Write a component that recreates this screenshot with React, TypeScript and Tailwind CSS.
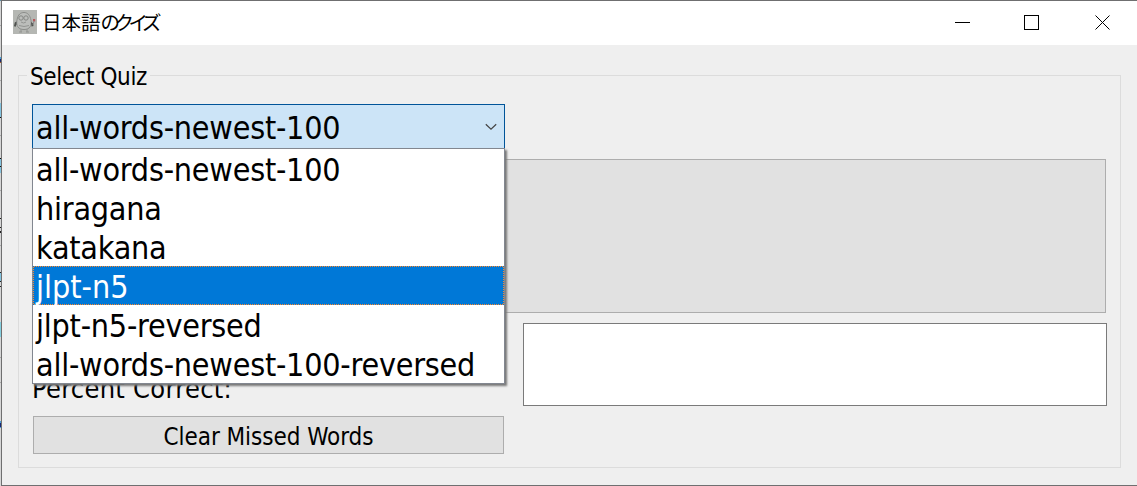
import React from "react";

const options = [
  { label: "all-words-newest-100" },
  { label: "hiragana" },
  { label: "katakana" },
  { label: "jlpt-n5", selected: true },
  { label: "jlpt-n5-reversed" },
  { label: "all-words-newest-100-reversed" },
];

// Slivers of the window behind, as [height, colour] from top to bottom.
const backdrop: [number, string][] = [
  [1, "#5c8fa8"], [24, "#d6d6d6"], [1, "#aaa"], [31, "#d6d6d6"], [2, "#4aa0d8"], [3, "#1a2a70"], [1, "#a05a28"],
  [17, "#d6d6d6"], [1, "#aaa"], [22, "#d6d6d6"], [14, "#84c4e0"], [1, "#111"], [17, "#d6d6d6"], [1, "#aaa"],
  [22, "#d6d6d6"], [1, "#111"], [7, "#84c4e0"], [1, "#111"], [6, "#84c4e0"], [17, "#d6d6d6"], [1, "#aaa"],
  [27, "#d6d6d6"], [1, "#222"], [8, "#d6d6d6"], [1, "#222"], [3, "#d6d6d6"], [2, "#222"], [12, "#d6d6d6"],
  [1, "#aaa"], [26, "#d6d6d6"], [1, "#222"], [8, "#84c4e0"], [1, "#222"], [4, "#d6d6d6"], [1, "#222"],
  [35, "#d6d6d6"], [15, "#84d0e0"], [20, "#d6d6d6"], [1, "#aaa"], [24, "#d6d6d6"], [1, "#aaa"],
  [38, "#d6d6d6"], [2, "#4aa0d8"], [4, "#182878"], [1, "#4aa0d8"], [57, "#d6d6d6"],
];

function AppIcon() {
  return (
    <svg width="24" height="24" viewBox="0 0 24 24" fill="none">
      <rect width="24" height="24" fill="#b5b7b3" />
      <path d="M4 10C5 4 8 2.500 11 2.500s6 2 7 8c.7 5-1 9-7 9s-8-4-7-9.500Z" fill="#bcbebb" stroke="#8c8e8b" />
      <circle cx="8" cy="8" r="2.200" stroke="#858784" />
      <circle cx="13" cy="8" r="2.200" stroke="#858784" />
      <path d="M8 12q2.500 2 5 0M6 15.500q5 2 10 0M8 19v3M14 19v3M6 22h3M13 22h3" stroke="#929491" />
      <path d="M3.500 11.500v3l-1.200 2.500-1.300-1 .8-3.500zM18 12l2 1.500.5 2.500-2 .5z" fill="#4e514e" />
      <path d="M20 9h2.200v2.500h-2.200z" fill="#b8595d" />
      <path d="M21 11l-1 4" stroke="#888" />
    </svg>
  );
}

export default function App() {
  return (
    <div className="flex h-[486px] w-[1137px] overflow-hidden font-['DejaVu_Sans_Condensed','DejaVu_Sans',sans-serif] text-black">
      <div className="flex w-px shrink-0 flex-col bg-[#d6d6d6]">
        {backdrop.map(([height, color], i) => (
          <i key={i} className="block w-px shrink-0" style={{ height, background: color }} />
        ))}
      </div>
      <div className="flex w-[1136px] flex-col border-y border-l border-[#6f6f70] bg-[#efefef]">
        <header className="flex h-11 shrink-0 items-center bg-white pb-[2px] pl-[11px]">
          <AppIcon />
          <h1 className="ml-[5px] w-[700px] whitespace-nowrap font-['Noto_Sans_CJK_JP',sans-serif] text-[19.500px] leading-none font-normal">
            日本語<span className="tracking-[-5.500px]">のクイズ</span>
          </h1>
          <div className="ml-auto flex items-center pr-[27px]">
            <svg width="15" height="15" className="mr-[54px]" shapeRendering="crispEdges"><path d="M0 7.500h15" stroke="#000" /></svg>
            <svg width="15" height="15" className="mr-[56px]" shapeRendering="crispEdges"><path d="M.5.5h14v14H.5z" fill="none" stroke="#000" /></svg>
            <svg width="15" height="15"><path d="m.5.5 14 14m0-14-14 14" stroke="#000" /></svg>
          </div>
        </header>
        <main className="px-4 pt-[30px]">
          <section className="relative flex h-[393px] w-[1103px] border border-[#dcdcdc]">
            <h2 className="absolute -top-[13px] left-[8px] bg-[#efefef] px-[3px] text-[24px] leading-[28px] tracking-[-0.420px] whitespace-nowrap">Select Quiz</h2>
            <div className="relative ml-[13px] mt-[28px] w-[473px]">
              <button className="flex h-[45px] w-full items-center justify-between border border-[#005499] bg-[#cce4f7] pl-[3px] pr-[7px] text-[32px] leading-none tracking-[-0.230px]">
                <span className="pt-[2px]">all-words-newest-100</span>
                <svg width="12" height="8" fill="none"><path d="m.8 1.200 5.200 5 5.200-5" stroke="#444" strokeWidth="1.200" /></svg>
              </button>
              <div className="mt-[223px] h-[44px] pt-[1px] text-[27px] leading-[32px] tracking-[0.270px]">Percent Correct:</div>
              <button className="ml-px h-[38px] w-[471px] border border-[#adadad] bg-[#e1e1e1] pt-[3px] text-[24px] leading-none tracking-[-0.050px]">Clear Missed Words</button>
              <ul className="absolute left-0 top-[44px] h-[236px] w-[473px] border border-[#828790] bg-white text-[32px] tracking-[-0.230px] shadow-[2px_2px_2px_#777]">
                {options.map((o) =>
                  o.selected ? (
                    <li key={o.label} className="h-[39px] bg-[repeating-conic-gradient(#ff8728_0_25%,#0078d7_0_50%)] bg-[length:2px_2px] p-px leading-none tracking-normal text-white">
                      <div className="flex h-[37px] items-center bg-[#0078d7] pl-[2px] pt-[2px]">{o.label}</div>
                    </li>
                  ) : (
                    <li key={o.label} className="flex h-[39px] items-center pl-[3px] pt-[2px] leading-none">{o.label}</li>
                  ),
                )}
              </ul>
            </div>
            <div className="ml-[18px] mt-[83px] w-[584px]">
              <div className="-ml-[30px] h-[154px] w-[613px] border border-[#adadad] bg-[#e1e1e1]" />
              <div className="mt-[10px] h-[83px] border border-[#7a7a7a] bg-white" />
            </div>
          </section>
        </main>
      </div>
    </div>
  );
}
